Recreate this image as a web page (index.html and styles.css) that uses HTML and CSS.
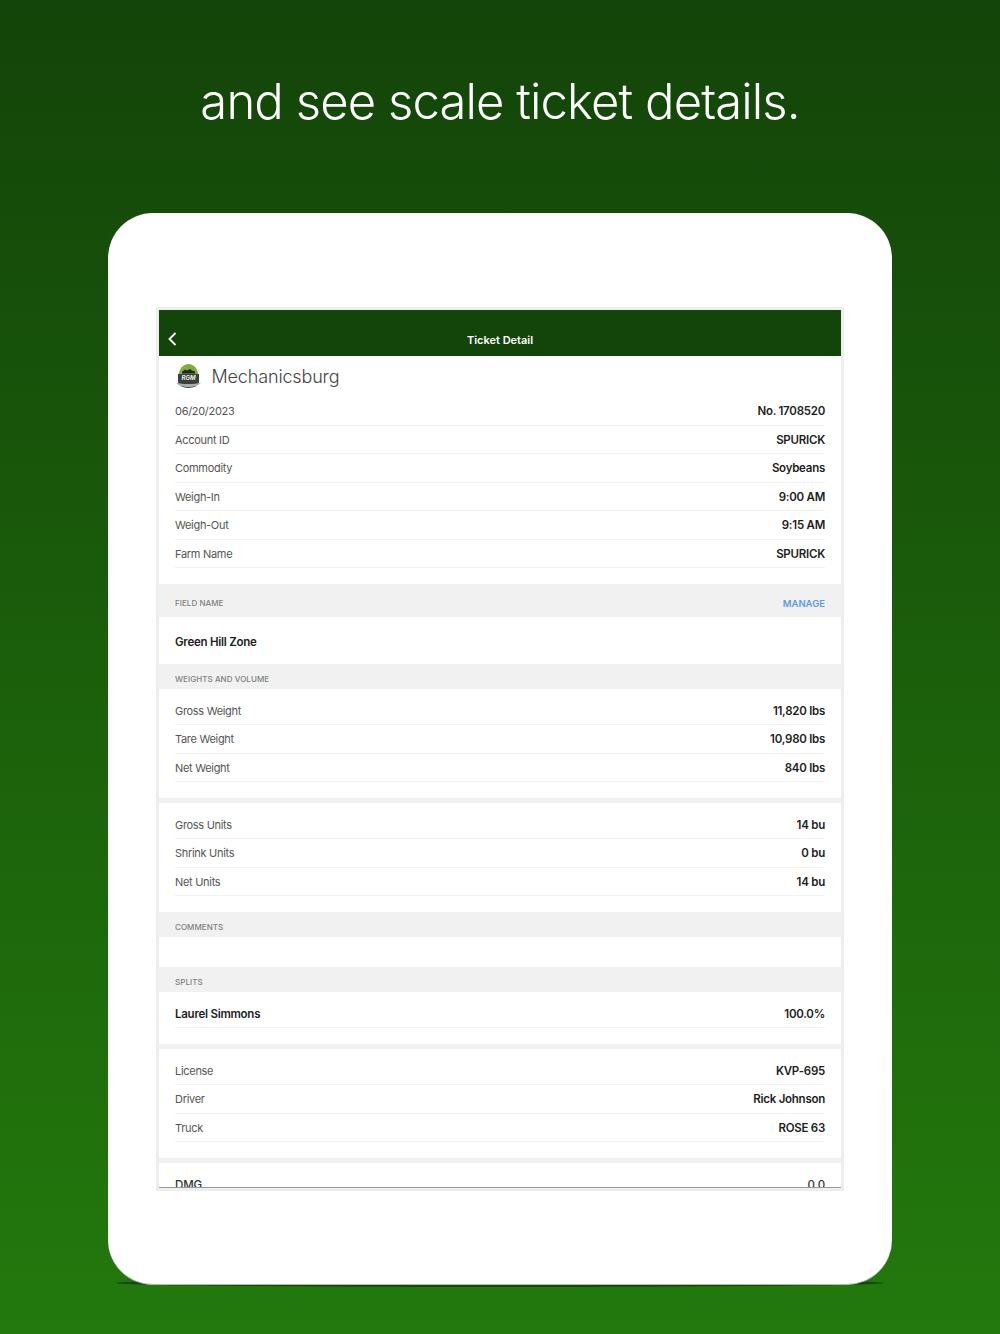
FILE: index.html
```html
<!DOCTYPE html>
<html lang="en">
<head>
<meta charset="utf-8">
<title>Ticket Detail</title>
<link rel="stylesheet" href="styles.css">
</head>
<body>
<main class="page">
  <header class="hero"><h1>and see scale ticket details.</h1></header>
  <section class="device">
    <div class="screen">
      <div class="viewport">
        <nav class="nav">
          <svg class="back" width="9" height="14" viewBox="0 0 9 14"><path d="M7.500 1 1.500 7l6 6" fill="none" stroke="#fff" stroke-width="1.800"/></svg>
          <span class="nav-title">Ticket Detail</span>
        </nav>
        <div class="location">
          <svg class="logo" width="27" height="26" viewBox="0 0 27 26">
            <path d="M3.500 13a10 12 0 0 1 20 0z" fill="#7fae3c"/>
            <path d="M3 11h21v8a10.500 6 0 0 1-21 0z" fill="#3a3f3c"/>
            <path d="M7 9l3-2.500 2 1 3-1.500 2 1.500 3 1v2H7z" fill="#1d241b"/>
            <path d="M1 19.500c4 1 7 1.500 12.500 1.500S22 20.500 26 19.500c-2 3-7 4.500-12.500 4.500S3 22.500 1 19.500z" fill="#a8aeaa"/>
            <text x="13.500" y="17" class="logo-text">RGM</text>
          </svg>
          <span class="location-name">Mechanicsburg</span>
        </div>
        <div class="list list-top">
          <div class="row"><span>06/20/2023</span><b>No. 1708520</b></div>
          <div class="row"><span>Account ID</span><b>SPURICK</b></div>
          <div class="row"><span>Commodity</span><b>Soybeans</b></div>
          <div class="row"><span>Weigh-In</span><b>9:00 AM</b></div>
          <div class="row"><span>Weigh-Out</span><b>9:15 AM</b></div>
          <div class="row"><span>Farm Name</span><b>SPURICK</b></div>
        </div>
        <div class="section-head section-tall"><span>Field Name</span><a class="manage">MANAGE</a></div>
        <div class="field">Green Hill Zone</div>
        <div class="section-head"><span>Weights and Volume</span></div>
        <div class="list">
          <div class="row"><span>Gross Weight</span><b>11,820 lbs</b></div>
          <div class="row"><span>Tare Weight</span><b>10,980 lbs</b></div>
          <div class="row"><span>Net Weight</span><b>840 lbs</b></div>
        </div>
        <div class="gap"></div>
        <div class="list">
          <div class="row"><span>Gross Units</span><b>14 bu</b></div>
          <div class="row"><span>Shrink Units</span><b>0 bu</b></div>
          <div class="row"><span>Net Units</span><b>14 bu</b></div>
        </div>
        <div class="section-head"><span>Comments</span></div>
        <div class="comments"></div>
        <div class="section-head"><span>Splits</span></div>
        <div class="list">
          <div class="row"><b>Laurel Simmons</b><b>100.0%</b></div>
        </div>
        <div class="gap"></div>
        <div class="list">
          <div class="row"><span>License</span><b>KVP-695</b></div>
          <div class="row"><span>Driver</span><b>Rick Johnson</b></div>
          <div class="row"><span>Truck</span><b>ROSE 63</b></div>
        </div>
        <div class="gap"></div>
        <div class="list">
          <div class="row"><span class="strong">DMG</span><span class="strong">0.0</span></div>
        </div>
      </div>
    </div>
  </section>
</main>
</body>
</html>
```
FILE: styles.css
```css
* { box-sizing: border-box; }
html, body { margin: 0; padding: 0; }
body {
  width: 1000px;
  height: 1334px;
  overflow: hidden;
  font-family: Inter, "Liberation Sans", sans-serif;
  background: linear-gradient(180deg, #134409 0%, #23790d 100%);
}
.page { position: relative; z-index: 0; display: flex; flex-direction: column; align-items: center; }
.hero { height: 213px; width: 100%; padding-top: 69px; }
.hero h1 {
  margin: 0;
  text-align: center;
  color: #fff;
  font-weight: 300;
  font-size: 49px;
  line-height: 66px;
  letter-spacing: -0.9px;
}
.device {
  position: relative;
  width: 784px;
  height: 1072px;
  padding: 94px 48px 0;
  background: #fff;
  border-radius: 45px;
  border-bottom: 1px solid #b5b9b2;
}
.device::after {
  content: "";
  position: absolute;
  z-index: -1;
  left: 8px;
  right: 8px;
  bottom: -3px;
  height: 8px;
  border-radius: 50%;
  background: #15490a;
}
.screen {
  height: 884px;
  border: 3px solid #eeeeee;
  background: #eee;
}
.viewport {
  height: 878px;
  overflow: hidden;
  background: #fff;
  border-bottom: 1px solid #999;
}
.nav {
  position: relative;
  height: 46px;
  background: #134409;
  display: flex;
  align-items: flex-end;
  justify-content: center;
  padding-bottom: 8px;
}
.back { position: absolute; left: 9px; top: 22px; }
.nav-title { color: #fff; font-size: 11px; font-weight: 600; line-height: 16px; }
.location {
  height: 41px;
  display: flex;
  align-items: center;
  gap: 9.500px;
  padding: 0 16px;
}
.logo { flex: none; margin-top: -2px; }
.logo-text { font-size: 6px; font-style: italic; font-weight: 700; fill: #e8ece8; text-anchor: middle; }
.location-name { font-size: 18px; font-weight: 300; color: #444; letter-spacing: -0.15px; }
.list { padding: 7.500px 16px 16px 16px; background: #fff; }
.list-top { padding-top: 0; }
.row {
  height: 28.500px;
  display: flex;
  align-items: center;
  justify-content: space-between;
  padding-top: 1px;
  border-bottom: 1px solid #f1f1f1;
  font-size: 11px;
  letter-spacing: -0.3px;
  color: #555;
}
.row b { font-size: 11.500px; letter-spacing: -0.25px; font-weight: 600; color: #1d1d1d; }
.row .strong { font-size: 11.500px; letter-spacing: -0.1px; font-weight: 500; color: #333; }
.section-head {
  height: 25px;
  display: flex;
  align-items: center;
  justify-content: space-between;
  padding: 4px 16px 0 16px;
  background: #f1f1f1;
  font-size: 8px;
  font-weight: 500;
  color: #808080;
  text-transform: uppercase;
  letter-spacing: 0.05px;
}
.section-tall { height: 33px; padding-top: 5px; }
.manage { font-size: 9.500px; font-weight: 600; color: #5b9bec; letter-spacing: 0; }
.field {
  height: 47px;
  display: flex;
  align-items: center;
  padding: 2px 16px 0;
  font-size: 11.500px;
  font-weight: 600;
  letter-spacing: -0.25px;
  color: #1d1d1d;
}
.comments { height: 30px; }
.gap { height: 5px; background: #f1f1f1; }
```
